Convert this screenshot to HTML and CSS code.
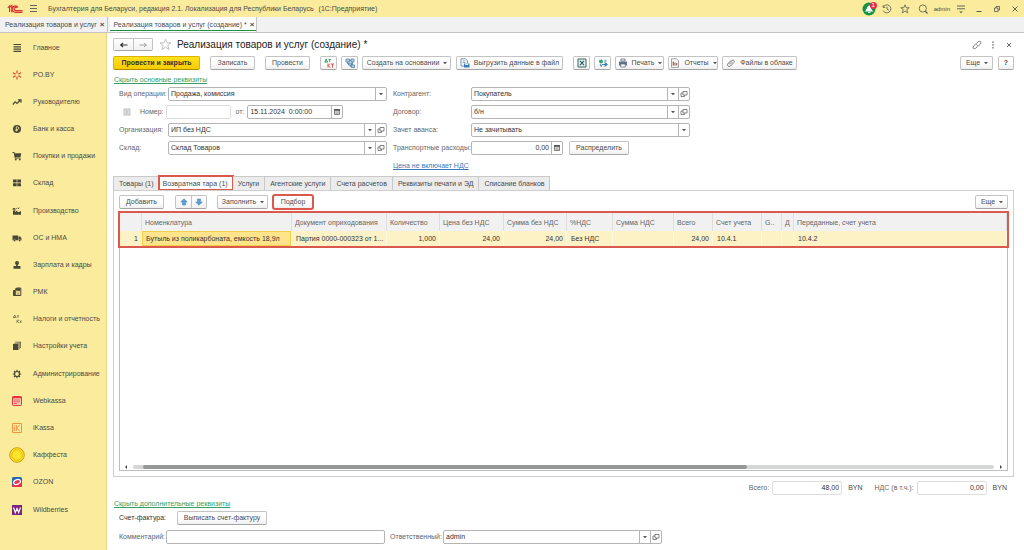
FILE: index.html
```html
<!DOCTYPE html>
<html lang="ru">
<head>
<meta charset="utf-8">
<title>Реализация товаров и услуг (создание)</title>
<link rel="stylesheet" href="styles.css">
</head>
<body>
<svg class="sprite" aria-hidden="true">
  <symbol id="caret" viewBox="0 0 6 6"><path d="M1 2h4L3 4.300z" fill="#555"/></symbol>
  <symbol id="open" viewBox="0 0 8 8"><path d="M3 1.500h4v3.500H3zM3 3H1v3.500h3.500V5" fill="none" stroke="#666" stroke-width=".8"/></symbol>
  <symbol id="calendar" viewBox="0 0 8 8"><path d="M1.500 1.500h5v5h-5z" fill="#ddd" stroke="#666" stroke-width=".8"/><path d="M1.200 1h5.600v1.800H1.200z" fill="#555"/><path d="M2.500 4h3M2.500 5.300h3" stroke="#888" stroke-width=".6"/></symbol>
  <symbol id="star" viewBox="0 0 14 14"><path d="M7 1.200l1.700 4h4.200L9.500 7.900l1.300 4.600L7 9.800l-3.800 2.700 1.300-4.600L1.100 5.200h4.200z" fill="none" stroke="currentColor"/></symbol>
</svg>

<header class="titlebar">
  <svg class="logo" viewBox="0 0 16 10"><path d="M.8 3.800L2.600 2V8M4.800 8.300V1.500L3.300 2.800M11 3.400A3.200 3.200 0 1 0 8.800 8.400H15.500M9.900 3.900A1.600 1.600 0 1 0 8.800 6.600H15.500" fill="none" stroke="#dc2f32" stroke-width="1.200"/></svg>
  <button class="bare menu" aria-label="Меню"><svg viewBox="0 0 9 9"><path d="M1 1.500h7M1 4.500h7M1 7.500h7" stroke="#555" stroke-width=".9"/></svg></button>
  <span class="app-name">Бухгалтерия для Беларуси, редакция 2.1. Локализация для Республики Беларусь</span>
  <span class="app-kind">(1С:Предприятие)</span>
  <div class="system">
    <button class="bare bell" aria-label="Уведомления"><svg viewBox="0 0 14 14"><circle cx="7" cy="7" r="6.500" fill="#119447"/><path d="M2.800 9.500C5 8 4.500 4 7.300 3.500C9 4 9 8 11.500 9.500z" fill="#fff"/><path d="M6 10.300h2.500" stroke="#fff"/></svg><span class="badge">1</span></button>
    <button class="bare" aria-label="История"><svg viewBox="0 0 10 10"><path d="M1.200 3.200A4 4 0 1 1 1.200 6.500M1.200 1.200v2.200h2.200M5 2.700v2.500l2 1.100" fill="none" stroke="#555" stroke-width=".8"/></svg></button>
    <button class="bare" aria-label="Избранное"><svg viewBox="0 0 14 14"><use href="#star"/></svg></button>
    <button class="bare" aria-label="Поиск"><svg viewBox="0 0 10 10"><circle cx="4.800" cy="4.500" r="3.600" fill="none" stroke="#555" stroke-width=".8"/><path d="M7.200 7.200L9.500 9.500" stroke="#555" stroke-width="1.200"/></svg></button>
    <span class="user">admin</span>
    <button class="bare" aria-label="Настройки"><svg viewBox="0 0 10 10"><path d="M1 2h8M1 4.800h8" stroke="#555" stroke-width=".9"/><path d="M3.200 7.500h3.600L5 9.300z" fill="#555"/></svg></button>
    <button class="bare" aria-label="Свернуть"><svg viewBox="0 0 10 10"><path d="M2.500 7.500h5" stroke="#555"/></svg></button>
    <button class="bare" aria-label="Развернуть"><svg viewBox="0 0 10 10"><path d="M2.500 4h3.500v3.500H2.500zM4 4V2.500h3.500V6H6" fill="none" stroke="#555" stroke-width=".8"/></svg></button>
    <button class="bare" aria-label="Закрыть"><svg viewBox="0 0 10 10"><path d="M2.500 2.500l5 5M7.500 2.500l-5 5" stroke="#555" stroke-width=".9"/></svg></button>
  </div>
</header>

<nav class="windows">
  <button class="window">Реализация товаров и услуг<b>×</b></button>
  <button class="window current">Реализация товаров и услуг (создание) *<b>×</b></button>
</nav>

<div class="body">
<nav class="sidebar">
  <a href="#"><svg viewBox="0 0 10 10"><path d="M1.500 1.500h7.500M1.500 3.800h7.500M1.500 6.100h7.500M1.500 8.400h7.500" stroke="#4b4738" stroke-width="1.200"/></svg>Главное</a>
  <a href="#"><svg viewBox="0 0 10 10"><path d="M5 .5v3M5 6.500v3M1 2.700l2.600 1.500M6.400 5.800L9 7.300M9 2.700L6.400 4.200M3.600 5.800L1 7.300" stroke="#e0392f" stroke-width="1.100"/></svg>PO.BY</a>
  <a href="#"><svg viewBox="0 0 10 10"><path d="M.8 7.500L3.200 4.800 5 6.500 8 3.500M6 2.800h3v3" fill="none" stroke="#4b4738" stroke-width="1.200"/></svg>Руководителю</a>
  <a href="#"><svg viewBox="0 0 10 10"><circle cx="5" cy="5" r="4" fill="#4b4738"/><path d="M4.300 7.500V2.800h1.200a1.200 1.200 0 0 1 0 2.600H3.500M3.500 6.500h2.200" fill="none" stroke="#faec9c" stroke-width=".8"/></svg>Банк и касса</a>
  <a href="#"><svg viewBox="0 0 10 10"><path d="M.5 1.500h1.700l1 5.500H8.500" fill="none" stroke="#4b4738"/><path d="M2.500 2.300h6.800L8.500 6H3z" fill="#4b4738"/><circle cx="3.800" cy="8.500" r=".9" fill="#4b4738"/><circle cx="7.800" cy="8.500" r=".9" fill="#4b4738"/></svg>Покупки и продажи</a>
  <a href="#"><svg viewBox="0 0 10 10"><path d="M1 1.500h3.700v3H1zM5.300 1.500H9v3H5.300zM1 5.200h3.700v3H1zM5.300 5.200H9v3H5.300z" fill="#4b4738"/></svg>Склад</a>
  <a href="#"><svg viewBox="0 0 10 10"><path d="M1 8.800V4l3 2V4.500l2.500 1.700L9 5v3.800z" fill="#4b4738"/><path d="M1.200 4V2.500h1.700V5M4 2.800l1-1M6 3l1.200-1.500" stroke="#4b4738" fill="none"/></svg>Производство</a>
  <a href="#"><svg viewBox="0 0 10 10"><path d="M.5 2.500h5.700v4.800H.5zM6.600 3.500h1.700l1.200 2v1.800H6.600z" fill="#4b4738"/><circle cx="2.500" cy="7.500" r="1.100" fill="#4b4738" stroke="#faec9c" stroke-width=".4"/><circle cx="7.700" cy="7.500" r="1.100" fill="#4b4738" stroke="#faec9c" stroke-width=".4"/></svg>ОС и НМА</a>
  <a href="#"><svg viewBox="0 0 10 10"><circle cx="5" cy="3" r="2" fill="#4b4738"/><path d="M4.200 4h1.600v2H8.500V8.800h-7V6h2.700z" fill="#4b4738"/></svg>Зарплата и кадры</a>
  <a href="#"><svg viewBox="0 0 10 10"><path d="M1.500 3.500h2v-1l1-.5v-1h4.300v7.500H1.500z" fill="none" stroke="#4b4738"/><path d="M3.500 1.500H8v2H4.500zM1.500 4h2v4h-2zM4.500 5h1M6.500 5h1M4.500 7h3" fill="#4b4738" stroke="#4b4738" stroke-width=".6"/></svg>РМК</a>
  <a href="#"><svg viewBox="0 0 10 10"><path d="M1 3.500h3.500M1.500 3.200L2.700 1l1.200 2.200M5 1.800h2M6 1.800v2M5 5.800v3M7 5.800L5.300 7.300 7 8.800M8 6.500l1.200 2.300M9.500 6.500L8 8.800" fill="none" stroke="#5c5744" stroke-width=".7"/></svg>Налоги и отчетность</a>
  <a href="#"><svg viewBox="0 0 10 10"><path d="M1 3h5.500v6H1zM2 1.900h5.700v6.300h-.5V2.500H2zM3.200.8h5.800v6.300h-.7V1.500H3.200z" fill="#4b4738"/></svg>Настройки учета</a>
  <a href="#"><svg viewBox="0 0 10 10"><circle cx="5" cy="5" r="2.500" fill="none" stroke="#4b4738" stroke-width="1.200"/><path d="M5 .8v1.700M5 7.500v1.700M.8 5h1.700M7.500 5h1.700M2 2l1.200 1.200M6.800 6.800L8 8M8 2L6.800 3.200M3.200 6.800L2 8" stroke="#4b4738" stroke-width="1.100"/></svg>Администрирование</a>
  <a href="#"><svg viewBox="0 0 10 10"><rect x=".5" y=".5" width="9" height="9" rx=".8" fill="#f6c9b4" stroke="#e5323e"/><path d="M.5 1.500h9" stroke="#e5323e" stroke-width="1.500"/><path d="M2 4h6M2 5.800h6M2 7.500h3" stroke="#e5323e" stroke-width=".7"/></svg>Webkassa</a>
  <a href="#"><svg viewBox="0 0 10 10"><path d="M.5.500h9v9h-9zM2.300 4v4M2.300 2v1M4.300 2v6M7.700 2L4.500 5l3.200 3" fill="none" stroke="#f08a3c" stroke-width=".9"/></svg>iKassa</a>
  <a href="#"><svg class="coin" viewBox="0 0 16 16"><circle cx="8" cy="8" r="7.300" fill="#fbdc1c" stroke="#c9a21a"/><circle cx="8" cy="8" r="5.200" fill="#fee32c" stroke="#dfb51a" stroke-width=".7"/></svg>Каффеста</a>
  <a href="#"><svg viewBox="0 0 10 10"><rect width="10" height="10" rx="1.500" fill="#2467b5"/><path d="M0 8L10 4v4.500Q10 10 8.500 10h-7Q0 10 0 8.500z" fill="#e5304d"/><ellipse cx="5" cy="5" rx="3.500" ry="2.300" transform="rotate(-20 5 5)" fill="#e5304d" stroke="#fff" stroke-width="1.200"/></svg>OZON</a>
  <a href="#"><svg viewBox="0 0 10 10"><rect width="10" height="10" fill="#792480"/><path d="M1.500 2.500L3.300 7.500 5 3.500 6.700 7.500 8.500 2.500" fill="none" stroke="#fff" stroke-width="1.200"/></svg>Wildberries</a>
</nav>

<main>
  <div class="head">
    <div class="pair">
      <button aria-label="Назад"><svg viewBox="0 0 10 8"><path d="M1.500 4h7M4 2L1.700 4 4 6" fill="none" stroke="#333" stroke-width="1.200"/></svg></button><button aria-label="Вперед"><svg viewBox="0 0 10 8"><path d="M1.500 4h7M6 2l2.300 2L6 6" fill="none" stroke="#999" stroke-width=".9"/></svg></button>
    </div>
    <svg class="fav" viewBox="0 0 14 14"><use href="#star"/></svg>
    <h1>Реализация товаров и услуг (создание) *</h1>
    <div class="head-tools">
      <button class="bare" aria-label="Ссылка"><svg viewBox="0 0 10 10"><path d="M4.500 3.500L6.500 1.500Q8 .8 8.700 1.700T8.500 4L6.500 5.800H5M5.500 6.500L3.500 8.500Q2 9.200 1.300 8.300T1.500 6L3.500 4.200H5" fill="none" stroke="#666" stroke-width=".8"/></svg></button>
      <button class="bare" aria-label="Еще"><svg viewBox="0 0 10 10"><path d="M4.300 1.500h1.400v1.500H4.300zM4.300 4.300h1.400v1.500H4.300zM4.300 7h1.400v1.500H4.300z" fill="#777"/></svg></button>
      <button class="bare" aria-label="Закрыть форму"><svg viewBox="0 0 10 10"><path d="M3 3l4 4M7 3L3 7" stroke="#555" stroke-width=".9"/></svg></button>
    </div>
  </div>

  <div class="toolbar">
    <button class="btn primary">Провести и закрыть</button>
    <button class="btn plain">Записать</button>
    <button class="btn plain">Провести</button>
    <div class="cluster">
      <button class="btn icon" aria-label="Дт/Кт"><svg viewBox="0 0 10 10"><path d="M.5 4h3.500M1 4L2.200 1l1.200 3M4.500 1.500h2.500M5.700 1.500V4" fill="none" stroke="#27965a" stroke-width=".9"/><path d="M4 5.500v4M6 5.500L4.200 7.500 6 9.500M7 6h3M8.500 6v3.500" fill="none" stroke="#d9453d" stroke-width=".9"/></svg></button>
      <button class="btn icon" aria-label="Структура"><svg viewBox="0 0 10 10"><path d="M1 1h3.500v3H1zM6 1h3v3H6zM3.500 5h3v2h-3zM6.500 7h3v2.500h-3zM2.500 4v2h1M4.500 2.500H6M5 7v1.300h1.500M7.500 4v3" fill="#b9d3e8" stroke="#4f7fa8" stroke-width=".8"/></svg></button>
      <button class="btn create">Создать на основании<svg class="caret"><use href="#caret"/></svg></button>
    </div>
    <button class="btn export"><svg viewBox="0 0 10 10"><path d="M1 .8h4.500l2 2V8H1z" fill="#fff" stroke="#57779b" stroke-width=".8"/><path d="M2.500 3h3M2.500 4.500h3" stroke="#6b8fb5" stroke-width=".7"/><path d="M4 5.500h5.500v4H4z" fill="#397cb9"/><path d="M5.200 5.500h3v1.400h-3z" fill="#fff"/></svg>Выгрузить данные в файл</button>
    <div class="cluster">
      <button class="btn icon" aria-label="Excel"><svg viewBox="0 0 10 10"><path d="M1 1h8v8H1z" fill="#e8f2ec" stroke="#31675c"/><path d="M3 2.800l4 4.400M7 2.800L3 7.200" stroke="#2a5f76" stroke-width="1.200"/></svg></button>
      <button class="btn icon" aria-label="Обмен"><svg viewBox="0 0 10 10"><circle cx="3" cy="3.500" r="2" fill="#35a473"/><circle cx="7.500" cy="2.800" r="1.300" fill="#8dbbd5"/><path d="M4 6.500h5M6.500 4.500L9 6.500 6.500 8.500M2 6.500l2 2" fill="none" stroke="#347fae" stroke-width="1.200"/></svg></button>
      <button class="btn print"><svg viewBox="0 0 10 10"><path d="M3 1h4v2H3z" fill="#fff" stroke="#566477" stroke-width=".8"/><path d="M1 3.500h8v4H1z" fill="#647389"/><path d="M2.700 6h4.600v3H2.700z" fill="#fff" stroke="#566477" stroke-width=".7"/></svg>Печать<svg class="caret"><use href="#caret"/></svg></button>
      <button class="btn reports"><svg viewBox="0 0 10 10"><path d="M1.500.8h5l2 2v6.500h-7z" fill="#fff" stroke="#777" stroke-width=".7"/><path d="M3.300 3.500v4" stroke="#d3333a" stroke-width="1.200"/><path d="M5 4.500v3" stroke="#35905a" stroke-width="1.100"/><path d="M6.700 5v2.500" stroke="#d3333a"/></svg>Отчеты<svg class="caret"><use href="#caret"/></svg></button>
      <button class="btn files"><svg viewBox="0 0 10 10"><path d="M2.500 6L6 2.500Q7.200 1.700 8 2.500T7.900 4.500L4.500 8Q3.300 9 2 8T2 5.500L5.500 2M4 6.500L6.500 4" fill="none" stroke="#666" stroke-width=".8"/></svg>Файлы в облаке</button>
    </div>
    <button class="btn more push">Еще<svg class="caret"><use href="#caret"/></svg></button>
    <button class="btn icon help">?</button>
  </div>

  <a class="section-link" href="#">Скрыть основные реквизиты</a>

  <form class="fields">
    <label for="kind">Вид операции:</label>
    <div class="field"><select id="kind"><option>Продажа, комиссия</option></select><span class="part"><svg class="caret"><use href="#caret"/></svg></span></div>
    <label class="second-label" for="partner">Контрагент:</label>
    <div class="field"><input id="partner" value="Покупатель"><button type="button" class="part" aria-label="Выбрать"><svg class="caret"><use href="#caret"/></svg></button><button type="button" class="part" aria-label="Открыть"><svg><use href="#open"/></svg></button></div>

    <div class="number-row">
      <svg class="mark" viewBox="0 0 8 8"><path d="M1 1h6v6H1z" fill="#eee" stroke="#aaa" stroke-width=".8"/><path d="M2.500 3h3M2.500 5h3" stroke="#999" stroke-width=".8"/></svg>
      <label for="num">Номер:</label>
      <div class="field light num"><input id="num"></div>
      <label for="date">от:</label>
      <div class="field date"><input id="date" value="15.11.2024  0:00:00"><button type="button" class="part" aria-label="Календарь"><svg><use href="#calendar"/></svg></button></div>
    </div>
    <label class="second-label" for="contract">Договор:</label>
    <div class="field"><input id="contract" value="б/н"><button type="button" class="part" aria-label="Выбрать"><svg class="caret"><use href="#caret"/></svg></button><button type="button" class="part" aria-label="Открыть"><svg><use href="#open"/></svg></button></div>

    <label for="org">Организация:</label>
    <div class="field"><input id="org" value="ИП без НДС"><button type="button" class="part" aria-label="Выбрать"><svg class="caret"><use href="#caret"/></svg></button><button type="button" class="part" aria-label="Открыть"><svg><use href="#open"/></svg></button></div>
    <label class="second-label" for="advance">Зачет аванса:</label>
    <div class="field"><select id="advance"><option>Не зачитывать</option></select><span class="part"><svg class="caret"><use href="#caret"/></svg></span></div>

    <label for="store">Склад:</label>
    <div class="field"><input id="store" value="Склад Товаров"><button type="button" class="part" aria-label="Выбрать"><svg class="caret"><use href="#caret"/></svg></button><button type="button" class="part" aria-label="Открыть"><svg><use href="#open"/></svg></button></div>
    <label class="second-label" for="transport">Транспортные расходы:</label>
    <div class="transport"><div class="field cost"><input id="transport" class="num-value" value="0,00"><button type="button" class="part" aria-label="Калькулятор"><svg><use href="#calendar"/></svg></button></div><button type="button" class="btn spread">Распределить</button></div>

    <a class="price-link" href="#">Цена не включает НДС</a>
  </form>

  <div class="tabs" role="tablist">
    <button role="tab">Товары (1)</button>
    <button role="tab" aria-selected="true" class="marked">Возвратная тара (1)</button>
    <button role="tab">Услуги</button>
    <button role="tab">Агентские услуги</button>
    <button role="tab">Счета расчетов</button>
    <button role="tab">Реквизиты печати и ЭД</button>
    <button role="tab">Списание бланков</button>
  </div>

  <section class="panel">
    <div class="panel-tools">
      <button class="btn add">Добавить</button>
      <div class="pair arrows">
        <button aria-label="Вверх"><svg viewBox="0 0 8 8"><path d="M4 .8L7.300 4H5.500v3h-3V4H.7z" fill="#5b9fd6" stroke="#3d7fb5" stroke-width=".5"/></svg></button><button aria-label="Вниз"><svg viewBox="0 0 8 8"><path d="M4 7.200L7.300 4H5.500V1h-3v3H.7z" fill="#5b9fd6" stroke="#3d7fb5" stroke-width=".5"/></svg></button>
      </div>
      <button class="btn fill">Заполнить<svg class="caret"><use href="#caret"/></svg></button>
      <button class="btn pick marked">Подбор</button>
      <button class="btn more push">Еще<svg class="caret"><use href="#caret"/></svg></button>
    </div>
    <div class="grid">
      <table>
        <colgroup><col class="c22"><col class="c150"><col class="c95"><col class="c53"><col class="c64"><col class="c63"><col class="c46"><col class="c61"><col class="c39"><col class="c49"><col class="c20"><col class="c12"><col></colgroup>
        <thead><tr><th></th><th>Номенклатура</th><th>Документ оприходования</th><th>Количество</th><th>Цена без НДС</th><th>Сумма без НДС</th><th>%НДС</th><th>Сумма НДС</th><th>Всего</th><th>Счет учета</th><th>G..</th><th>Д</th><th>Переданные, счет учета</th></tr></thead>
        <tbody><tr><td class="r">1</td><td class="active">Бутыль из поликарбоната, емкость 18,9л</td><td>Партия 0000-000323 от 1...</td><td class="r">1,000</td><td class="r">24,00</td><td class="r">24,00</td><td>Без НДС</td><td></td><td class="r">24,00</td><td>10.4.1</td><td></td><td></td><td>10.4.2</td></tr></tbody>
      </table>
      <div class="scroll">
        <svg viewBox="0 0 4 6"><path d="M3 1v4L1 3z" fill="#444"/></svg>
        <div class="track"><div class="thumb"></div></div>
        <svg viewBox="0 0 4 6"><path d="M1 1v4L3 3z" fill="#444"/></svg>
      </div>
    </div>
  </section>

  <div class="totals">
    <label for="total">Всего:</label><div class="field light sum"><input id="total" class="num-value" value="48,00" readonly></div><span class="cur">BYN</span>
    <label for="vat">НДС (в т.ч.):</label><div class="field light sum"><input id="vat" class="num-value" value="0,00" readonly></div><span>BYN</span>
  </div>

  <a class="section-link lower" href="#">Скрыть дополнительные реквизиты</a>
  <div class="line invoice"><span class="dark">Счет-фактура:</span><button class="btn write">Выписать счет-фактуру</button></div>
  <div class="line comment"><label for="note">Комментарий:</label><div class="field note"><input id="note"></div><label for="owner">Ответственный:</label><div class="field owner"><input id="owner" value="admin"><button type="button" class="part" aria-label="Выбрать"><svg class="caret"><use href="#caret"/></svg></button><button type="button" class="part" aria-label="Открыть"><svg><use href="#open"/></svg></button></div></div>
</main>
</div>
</body>
</html>
```

FILE: styles.css
```css
* { box-sizing: border-box; }

body {
  margin: 0;
  min-height: 100vh;
  display: flex;
  flex-direction: column;
  background: #fff;
  color: #4a4a4a;
  font: 7px/8px "Liberation Sans", Arial, sans-serif;
}

button, input, select { font: inherit; color: inherit; margin: 0; }
button { padding: 0; white-space: nowrap; }
svg { flex: none; display: block; }
.sprite { position: absolute; width: 0; height: 0; }
.bare { border: 0; background: none; display: grid; place-items: center; }
.push { margin-left: auto; }

.titlebar {
  display: flex;
  align-items: center;
  height: 17px;
  padding: 0 4px 0 7px;
  background: #faec9c;
}
.logo { width: 16px; height: 10px; }
.menu { margin: 0 10px 0 6px; }
.menu svg { width: 9px; height: 9px; }
.app-kind { margin-left: 5px; }
.system { display: flex; align-items: center; gap: 8px; margin-left: auto; }
.system svg { width: 10px; height: 10px; }
.system .bell { position: relative; margin-right: -2px; }
.system .bell svg { width: 14px; height: 14px; }
.badge {
  position: absolute;
  top: 0;
  right: -1px;
  width: 7px;
  height: 7px;
  border-radius: 50%;
  background: #ec2f45;
  color: #fff;
  font-size: 6px;
  line-height: 7px;
}
.user { font-size: 6px; margin: 0 -2px; }

.windows {
  display: flex;
  height: 16px;
  background: #f1f1f1;
  border-bottom: 1px solid #c4c4c4;
}
.window {
  display: flex;
  align-items: center;
  gap: 3px;
  padding: 0 2px 0 5px;
  border: 0;
  border-right: 1px solid #c4c4c4;
  background: none;
}
.window b { font-size: 8px; }
.window.current {
  padding-left: 4px;
  margin-left: 2px;
  background: #fff;
  box-shadow: inset 0 -1px #fff, inset 0 -2px #119447;
}

.body { flex: 1; display: flex; }
.sidebar {
  flex: none;
  display: flex;
  flex-direction: column;
  width: 107px;
  padding: 1px 0 27px;
  background: #faec9c;
  border-right: 1px solid #e9d987;
}
.sidebar a {
  flex: 1;
  display: flex;
  align-items: center;
  gap: 11px;
  padding-left: 12px;
  color: inherit;
  text-decoration: none;
  white-space: nowrap;
}
.sidebar svg { width: 10px; height: 10px; }
.sidebar svg.coin { width: 16px; height: 16px; margin: 0 -3px; }

main {
  flex: 1;
  min-width: 0;
  display: flex;
  flex-direction: column;
  padding: 5px 10px 6px 6px;
}

.head { display: flex; align-items: center; height: 13px; }
h1 { margin: 0; font-size: 10px; line-height: 13px; font-weight: 400; color: #222; }
.fav { width: 13px; height: 13px; margin: 0 5px 0 6px; color: #bbb; }
.head-tools { display: flex; gap: 6px; margin-left: auto; }
.head-tools svg { width: 10px; height: 10px; }

.pair { display: flex; border: 1px solid #c3c3c3; border-bottom-color: #a5a5a5; border-radius: 2px; }
.pair button {
  display: grid;
  place-items: center;
  width: 19px;
  height: 11px;
  border: 0;
  background: linear-gradient(#fff, #f1f1f1);
}
.pair button + button { border-left: 1px solid #c3c3c3; }
.pair svg { width: 10px; height: 8px; }

.btn {
  display: flex;
  align-items: center;
  justify-content: center;
  gap: 4px;
  height: 14px;
  border: 1px solid #c3c3c3;
  border-bottom-color: #a5a5a5;
  border-radius: 2px;
  background: linear-gradient(#fff 50%, #efefef);
}
.btn svg { width: 10px; height: 10px; }
svg.caret, .btn svg.caret { width: 6px; height: 6px; }
.btn svg.caret { margin: 0 -2px 0 -1px; }
.primary {
  width: 87px;
  color: #333;
  font-weight: 700;
  background: linear-gradient(#ffe11d, #f8cb00);
  border-color: #dcb100;
  border-bottom-color: #b08d00;
}
.toolbar { display: flex; gap: 10px; margin-top: 5px; }
.cluster { display: flex; gap: 4px; }
.toolbar .export { width: 107px; margin-left: -5px; }
.plain { width: 45px; }
.icon { width: 17px; }
.create { width: 89px; }
.print { width: 49px; }
.reports { width: 50px; }
.files { width: 75px; }
.more { width: 33px; }
.toolbar .help { width: 16px; margin-left: -5px; font-weight: 700; }

a { color: #3b78b5; }
.section-link { align-self: flex-start; margin-top: 6px; color: #35a065; margin-left: 1px; }

.fields {
  display: grid;
  grid-template-columns: 49px 219px 84px 219px;
  grid-auto-rows: 14px;
  row-gap: 4px;
  align-items: center;
  margin: 3px 0 0 6px;
}
.second-label { padding-left: 6px; }
label { color: #666; white-space: nowrap; }
.field {
  display: flex;
  flex: 1;
  min-width: 0;
  height: 14px;
  border: 1px solid #b5b5b5;
  border-radius: 2px;
  background: #fff;
}
.field input, .field select {
  flex: 1;
  min-width: 0;
  width: 0;
  padding: 0 2px;
  border: 0;
  outline: 0;
  background: none;
  appearance: none;
  color: #333;
  white-space: pre;
}
.field .num-value { text-align: right; }
.field.light { border-color: #dedede; }
.part {
  flex: none;
  display: grid;
  place-items: center;
  width: 11px;
  border: 0;
  border-left: 1px solid #b5b5b5;
  background: none;
}
.part svg { width: 8px; height: 8px; }
.part svg.caret { width: 6px; height: 6px; }
.number-row { grid-column: span 2; display: flex; align-items: center; padding-left: 4px; }
.mark { width: 8px; height: 8px; margin-right: 9px; }
.number-row .num { flex: none; width: 65px; margin: 0 5px 0 2px; }
.number-row .date { flex: none; width: 96px; margin-left: 3px; }
.transport { display: flex; gap: 6px; }
.transport .cost { flex: none; width: 92px; }
.spread { width: 60px; }
.fields > .price-link { grid-column: 3 / span 2; padding-left: 6px; }

.tabs { display: flex; margin-top: 3px; }
.tabs button {
  height: 14px;
  padding: 0 5px;
  border: 1px solid #c9c9c9;
  border-left-width: 0;
  border-bottom: 0;
  background: #ececec;
}
.tabs button:first-child { border-left-width: 1px; padding-right: 4px; }
.tabs button:last-child { padding-right: 4px; }
.tabs button[aria-selected] { background: #fff; padding: 0 4px; }
.marked, .tabs .marked { outline: 2px solid #d9594c; outline-offset: -1px; }

.panel {
  flex: 1;
  display: flex;
  flex-direction: column;
  border: 1px solid #cfcfcf;
  padding: 4px 5px 5px;
}
.panel-tools { display: flex; }
.add { width: 45px; }
.arrows { margin: 0 10px 0 11px; height: 14px; }
.arrows button { width: 15px; height: 12px; }
.arrows svg { width: 8px; height: 8px; }
.fill { width: 51px; }
.pick { width: 40px; margin-left: 5px; }

.grid {
  flex: 1;
  display: flex;
  flex-direction: column;
  margin-top: 4px;
  border: 1px solid #bdbdbd;
  border-top: 0;
}
table {
  width: 100%;
  table-layout: fixed;
  border-collapse: separate;
  border-spacing: 0;
  outline: 2px solid #d9594c;
  outline-offset: 0;
}
th, td {
  padding: 0 3px 0 4px;
  overflow: hidden;
  white-space: nowrap;
  text-align: left;
  font-weight: 400;
}
th { height: 18px; padding: 2px 3px 0; background: #f1f1f1; border-right: 1px solid #dedede; color: #666; }
td { height: 15px; background: #fdf1c6; border-right: 1px solid #fff8e0; color: #333; }
.active { background: #ffe48b; box-shadow: inset 0 0 0 1px #f3cf45; }
.r { text-align: right; }
.c22 { width: 22px; } .c150 { width: 150px; } .c95 { width: 95px; } .c53 { width: 53px; }
.c64 { width: 64px; } .c63 { width: 63px; } .c46 { width: 46px; } .c61 { width: 61px; }
.c39 { width: 39px; } .c49 { width: 49px; } .c20 { width: 20px; } .c12 { width: 12px; }

.scroll { display: flex; align-items: center; gap: 5px; margin-top: auto; padding: 0 4px; }
.scroll svg { width: 4px; height: 6px; }
.track { flex: 1; height: 4px; padding-left: 10px; border-radius: 2px; background: #d5d7d6; }
.thumb { width: 71%; height: 4px; border-radius: 2px; background: #959896; }

.totals { display: flex; align-items: center; justify-content: flex-end; margin-top: 4px; padding-right: 7px; }
.sum { flex: none; width: 70px; margin: 0 6px 0 3px; }
.cur { margin-right: 12px; }

.section-link.lower { margin-top: 5px; }
.line { display: flex; align-items: center; padding-left: 6px; }
.dark { width: 58px; color: #333; }
.invoice { margin-top: 3px; }
.write { width: 90px; }
.comment { margin-top: 5px; }
.comment label:first-child { width: 47px; }
.note { flex: none; width: 219px; margin-right: 5px; }
.comment label:nth-of-type(2) { width: 53px; }
.owner { flex: none; width: 219px; }
```
